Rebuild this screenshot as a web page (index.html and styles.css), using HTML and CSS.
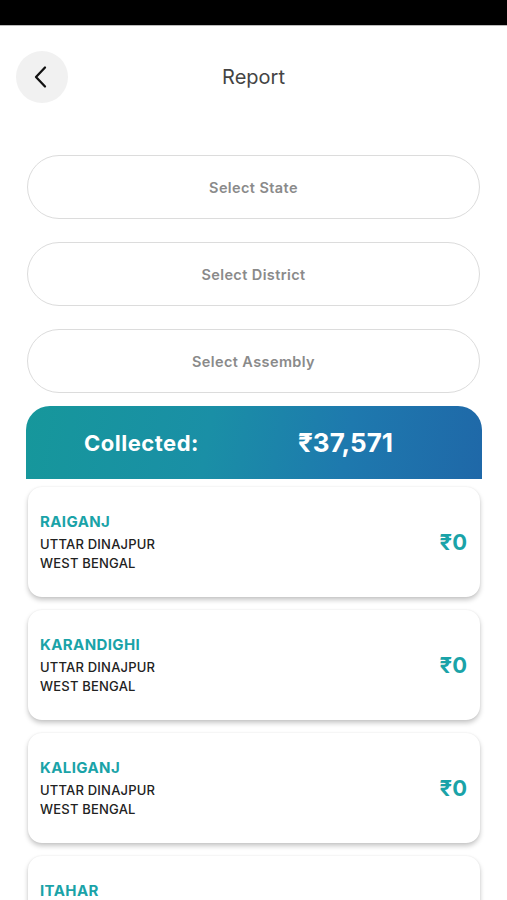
FILE: index.html
```html
<!DOCTYPE html>
<html lang="en">
<head>
    <meta charset="UTF-8">
    <title>Report</title>
    <meta name="viewport" content="width=device-width, initial-scale=1.0">
    <link rel="stylesheet" href="styles.css">
</head>
<body>

<div class="status-bar"></div>

<header class="topbar">
    <button class="back-btn" aria-label="Back">
        <svg width="22" height="24" viewBox="0 0 22 24">
            <path d="M15 2.5 L6 12 L15 21.5" fill="none" stroke="#111" stroke-width="2.3" stroke-linecap="round" stroke-linejoin="round"/>
        </svg>
    </button>
    <div class="title">Report</div>
</header>

<div class="filters">
    <div class="select">Select State</div>
    <div class="select">Select District</div>
    <div class="select">Select Assembly</div>
</div>

<div class="summary">
    <span class="summary-label">Collected:</span>
    <span class="summary-value">₹37,571</span>
</div>

<div class="list">
    <div class="card">
        <div class="info">
            <div class="name">RAIGANJ</div>
            <div class="line">UTTAR DINAJPUR</div>
            <div class="line">WEST BENGAL</div>
        </div>
        <div class="amount">₹0</div>
    </div>
    <div class="card">
        <div class="info">
            <div class="name">KARANDIGHI</div>
            <div class="line">UTTAR DINAJPUR</div>
            <div class="line">WEST BENGAL</div>
        </div>
        <div class="amount">₹0</div>
    </div>
    <div class="card">
        <div class="info">
            <div class="name">KALIGANJ</div>
            <div class="line">UTTAR DINAJPUR</div>
            <div class="line">WEST BENGAL</div>
        </div>
        <div class="amount">₹0</div>
    </div>
    <div class="card">
        <div class="info">
            <div class="name">ITAHAR</div>
            <div class="line">UTTAR DINAJPUR</div>
            <div class="line">WEST BENGAL</div>
        </div>
        <div class="amount">₹0</div>
    </div>
</div>

</body>
</html>
```

FILE: styles.css
```css
body {
    margin: 0;
    padding: 0;
    background: #fff;
    font-family: 'Inter', 'Noto Sans', sans-serif;
    color: #222;
    overflow: hidden;
}

.status-bar {
    height: 25px;
    background: #000;
    border-bottom: 1px solid #bbb;
}

.topbar {
    display: flex;
    align-items: center;
    padding: 25px 16px 0;
    height: 52px;
}

.back-btn {
    width: 52px;
    height: 52px;
    border-radius: 50%;
    border: none;
    background: #f1f1f1;
    display: flex;
    align-items: center;
    justify-content: center;
    padding: 0;
    padding-right: 3px;
}

.title {
    flex: 1;
    text-align: center;
    margin-right: 52px;
    font-size: 20px;
    color: #444;
}

.filters {
    display: flex;
    flex-direction: column;
    gap: 23px;
    padding: 0 27px;
    margin-top: 52px;
}

.select {
    height: 62px;
    border: 1px solid #dcdcdc;
    border-radius: 32px;
    display: flex;
    align-items: center;
    justify-content: center;
    font-size: 14.5px;
    letter-spacing: 0.4px;
    font-weight: 600;
    color: #8a8a8a;
}

.summary {
    margin: 13px 25px 0 26px;
    height: 73px;
    border-radius: 24px 24px 0 0;
    background: linear-gradient(100deg, #16979b 0%, #1a8fa6 40%, #1e79ae 70%, #1f68a8 100%);
    display: flex;
    align-items: center;
    color: #fff;
    font-weight: 700;
}

.summary-label {
    font-size: 22px;
    letter-spacing: 0.5px;
    margin-left: 58px;
    width: 214px;
}

.summary-value {
    font-size: 26px;
}

.list {
    display: flex;
    flex-direction: column;
    gap: 13px;
    padding: 8px 27px 0 28px;
}

.card {
    height: 110px;
    border-radius: 14px;
    background: #fff;
    box-shadow: 0 3px 5px rgba(0, 0, 0, 0.22), 0 0 2px rgba(0, 0, 0, 0.08);
    display: flex;
    align-items: center;
    justify-content: space-between;
    padding: 0 13px 0 12px;
    flex-shrink: 0;
}

.name {
    font-size: 15px;
    letter-spacing: 0.4px;
    font-weight: 700;
    color: #1aa3a8;
    margin-bottom: 4px;
}

.line {
    font-size: 13px;
    letter-spacing: 0.2px;
    font-weight: 500;
    color: #222;
    line-height: 19px;
}

.amount {
    font-size: 22px;
    font-weight: 700;
    color: #1aa3a8;
}
```
